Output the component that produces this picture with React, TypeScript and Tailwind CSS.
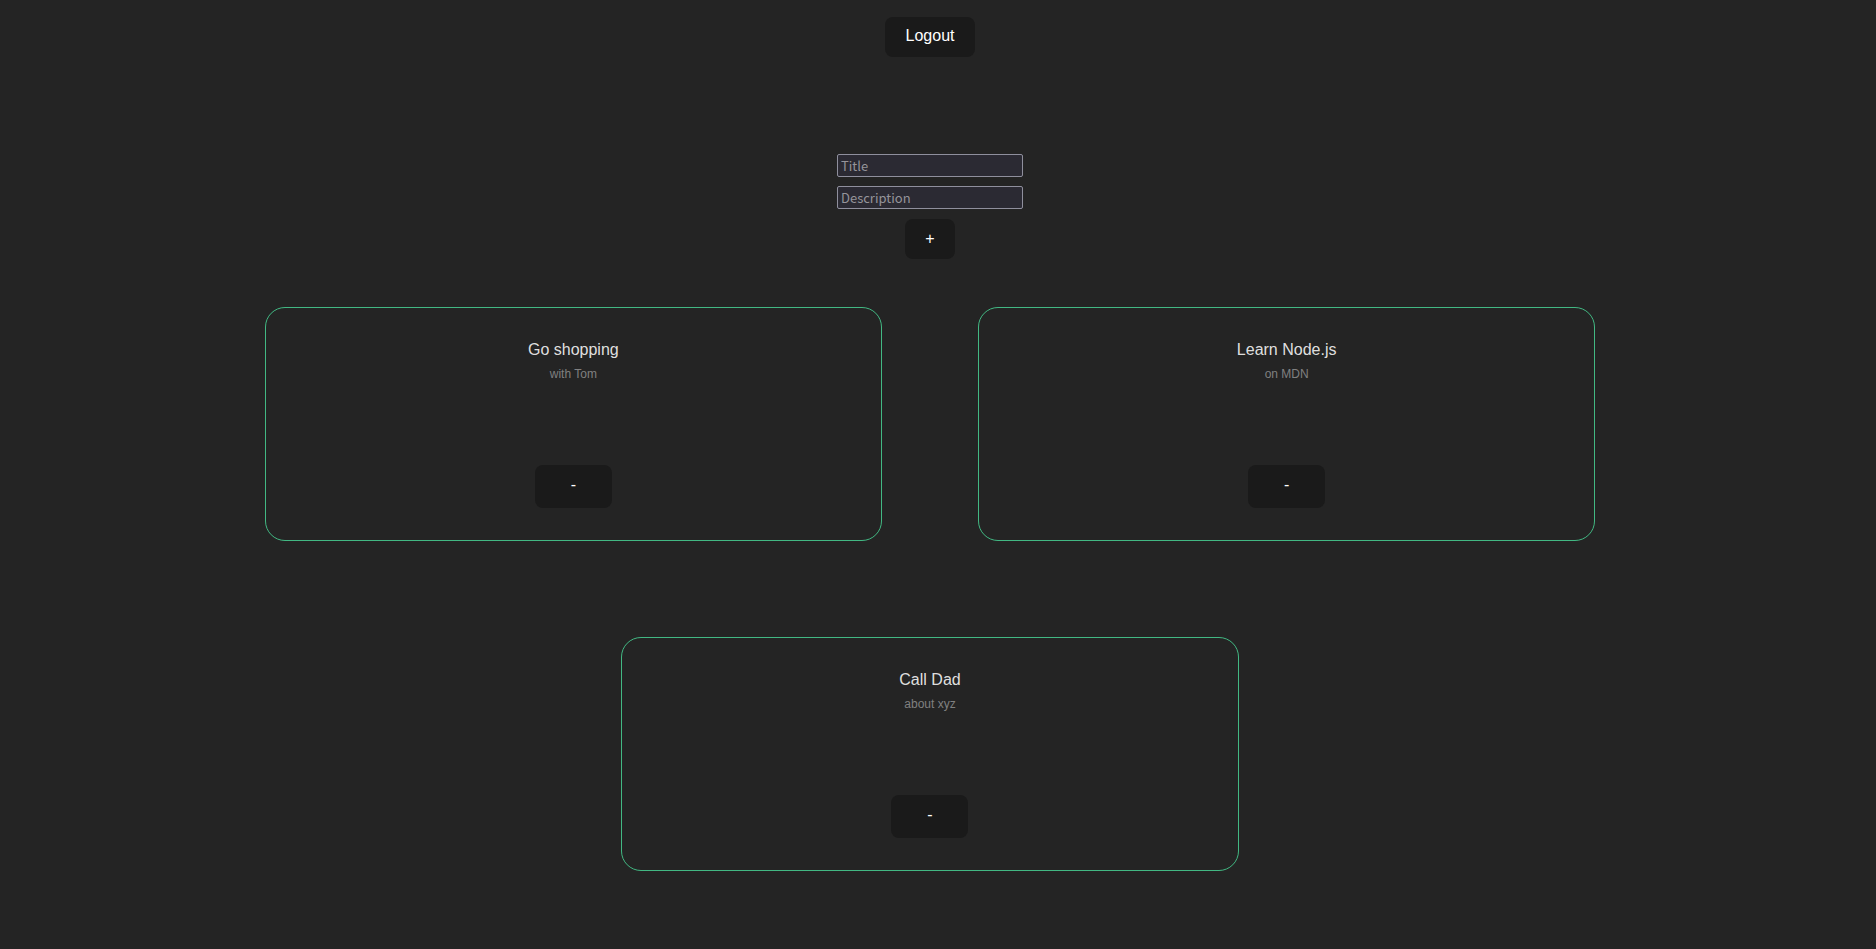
type Todo = { title: string; description: string };

const todos: Todo[] = [
  { title: "Go shopping", description: "with Tom" },
  { title: "Learn Node.js", description: "on MDN" },
  { title: "Call Dad", description: "about xyz" },
];

const buttonBase =
  "rounded-lg bg-[#1a1a1a] leading-5 font-medium text-white hover:outline hover:outline-[#42b883]";

const inputBase =
  "h-[23px] w-[186px] rounded-xs border border-[#8f8f9d] bg-[#2b2a33] px-[3px] font-['Noto_Sans_CJK_SC',sans-serif] text-[13px] text-white placeholder:text-[#95949a]";

function TodoCard({ title, description }: Todo) {
  return (
    <li className="flex w-1/3 flex-col items-center rounded-[20px] border border-[#42b883] py-8">
      <h2 className="text-base leading-5 text-white/87">{title}</h2>
      <p className="mt-1 text-xs leading-5 text-[#808080]">{description}</p>
      <button
        type="button"
        aria-label={`Remove ${title}`}
        className={`${buttonBase} mt-[81px] h-[43px] w-[77px] pb-1 text-base`}
      >
        -
      </button>
    </li>
  );
}

export default function App() {
  return (
    <div className="min-h-screen bg-[#242424] pt-[17px] pr-4 font-['Liberation_Sans',Arial,sans-serif]">
      <header className="flex justify-center">
        <button type="button" className={`${buttonBase} h-10 w-[90px] pb-0.5 text-base`}>
          Logout
        </button>
      </header>

      <form
        className="mt-[97px] flex flex-col items-center"
        onSubmit={(event) => event.preventDefault()}
      >
        <input type="text" aria-label="Title" placeholder="Title" className={inputBase} />
        <input
          type="text"
          aria-label="Description"
          placeholder="Description"
          className={`${inputBase} mt-[9px]`}
        />
        <button
          type="submit"
          aria-label="Add"
          className={`${buttonBase} mt-[10px] h-10 w-[50px] pb-px text-base`}
        >
          +
        </button>
      </form>

      <ul className="mt-12 flex flex-wrap justify-center gap-24 px-1 pb-[78px]">
        {todos.map((todo) => (
          <TodoCard key={todo.title} {...todo} />
        ))}
      </ul>
    </div>
  );
}
